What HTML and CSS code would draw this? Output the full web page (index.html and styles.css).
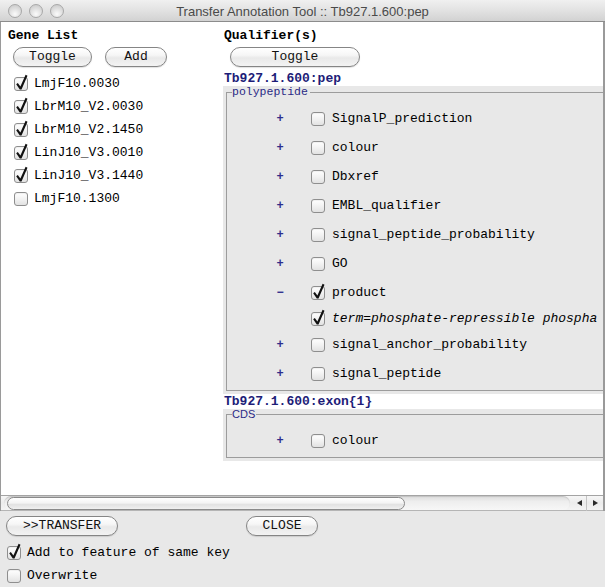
FILE: index.html
```html
<!DOCTYPE html>
<html>
<head>
<meta charset="utf-8">
<title>Transfer Annotation Tool</title>
<link rel="stylesheet" href="styles.css">
</head>
<body>
<svg class="defs" width="0" height="0" aria-hidden="true">
  <defs>
    <symbol id="tick" viewBox="0 -4 16 18">
      <path d="M2.2 7.3 L3.8 6.1 L6.4 9.5 L11.6 -2.2 L13.5 -1.3 L7.5 12.6 L5.8 12.6 Z" fill="#111"/>
    </symbol>
  </defs>
</svg>
<div class="window">
  <div class="titlebar">
    <div class="lights"><span class="light"></span><span class="light"></span><span class="light"></span></div>
    <div class="title">Transfer Annotation Tool :: Tb927.1.600:pep</div>
    <div></div>
  </div>
  <div class="pane">
    <div class="viewport">
      <div class="content">
        <div class="genes">
          <div class="head">Gene List</div>
          <div class="btnrow">
            <span class="btn w-toggle">Toggle</span>
            <span class="btn w-add">Add</span>
          </div>
          <ul class="genelist">
            <li><span class="cb"><svg class="tick"><use href="#tick"/></svg></span>LmjF10.0030</li>
            <li><span class="cb"><svg class="tick"><use href="#tick"/></svg></span>LbrM10_V2.0030</li>
            <li><span class="cb"><svg class="tick"><use href="#tick"/></svg></span>LbrM10_V2.1450</li>
            <li><span class="cb"><svg class="tick"><use href="#tick"/></svg></span>LinJ10_V3.0010</li>
            <li><span class="cb"><svg class="tick"><use href="#tick"/></svg></span>LinJ10_V3.1440</li>
            <li><span class="cb"></span>LmjF10.1300</li>
          </ul>
        </div>
        <div class="quals">
          <div class="head">Qualifier(s)</div>
          <div class="btnrow qbtn"><span class="btn w-qtoggle">Toggle</span></div>
          <div class="feat">Tb927.1.600:pep</div>
          <div class="panel">
            <fieldset class="group">
              <legend class="legend mono">polypeptide</legend>
              <div class="row first"><span class="exp">+</span><span class="cb"></span><span class="qname">SignalP_prediction</span></div>
              <div class="row"><span class="exp">+</span><span class="cb"></span><span class="qname">colour</span></div>
              <div class="row"><span class="exp">+</span><span class="cb"></span><span class="qname">Dbxref</span></div>
              <div class="row"><span class="exp">+</span><span class="cb"></span><span class="qname">EMBL_qualifier</span></div>
              <div class="row"><span class="exp">+</span><span class="cb"></span><span class="qname">signal_peptide_probability</span></div>
              <div class="row"><span class="exp">+</span><span class="cb"></span><span class="qname">GO</span></div>
              <div class="row"><span class="exp">&minus;</span><span class="cb"><svg class="tick"><use href="#tick"/></svg></span><span class="qname">product</span></div>
              <div class="row tight"><span class="exp"></span><span class="cb"><svg class="tick"><use href="#tick"/></svg></span><span class="qname term">term=phosphate-repressible phospha</span></div>
              <div class="row tight"><span class="exp">+</span><span class="cb"></span><span class="qname">signal_anchor_probability</span></div>
              <div class="row"><span class="exp">+</span><span class="cb"></span><span class="qname">signal_peptide</span></div>
            </fieldset>
          </div>
          <div class="feat">Tb927.1.600:exon{1}</div>
          <div class="panel">
            <fieldset class="group cds">
              <legend class="legend sans">CDS</legend>
              <div class="row first"><span class="exp">+</span><span class="cb"></span><span class="qname">colour</span></div>
            </fieldset>
          </div>
        </div>
      </div>
    </div>
    <div class="hbar">
      <div class="track"><div class="thumb"></div></div>
      <div class="arrows">
        <span class="arrow"><span class="tri-left"></span></span>
        <span class="arrow right"><span class="tri-right"></span></span>
      </div>
    </div>
  </div>
  <div class="bottom">
    <div class="btnrow">
      <span class="btn w-transfer">&gt;&gt;TRANSFER</span>
      <span class="btn w-close">CLOSE</span>
    </div>
    <ul class="options">
      <li><span class="cb"><svg class="tick"><use href="#tick"/></svg></span>Add to feature of same key</li>
      <li><span class="cb"></span>Overwrite</li>
    </ul>
  </div>
</div>
</body>
</html>
```

FILE: styles.css
```css
* { box-sizing: border-box; }
html, body { margin: 0; padding: 0; }
body {
  width: 605px;
  height: 587px;
  overflow: hidden;
  background: #e8e8e8;
  font-family: "Liberation Mono", "Courier New", monospace;
  font-size: 13px;
  color: #000;
}
.defs { position: absolute; width: 0; height: 0; }

.window { width: 605px; height: 587px; display: flex; flex-direction: column; }

/* title bar */
.titlebar {
  height: 22px;
  flex: 0 0 22px;
  display: grid;
  grid-template-columns: 1fr auto 1fr;
  align-items: start;
  background: linear-gradient(to bottom, #f0f0f0 0%, #e2e2e2 50%, #d2d2d2 100%);
  border-bottom: 1px solid #8c8c8c;
}
.lights { display: flex; gap: 7px; padding: 4px 0 0 8px; }
.light {
  width: 14px; height: 14px; border-radius: 50%;
  border: 1px solid #a8a8a8;
  background: radial-gradient(circle at 50% 75%, #fbfbfb 0%, #e2e2e2 45%, #c4c4c4 100%);
}
.title {
  font-family: "Liberation Sans", Arial, sans-serif;
  font-size: 13px;
  line-height: 19px;
  padding-top: 2px;
  color: #4a4a4a;
  white-space: nowrap;
}

/* scroll pane */
.pane {
  flex: 0 0 489px;
  display: flex; flex-direction: column;
  background: #fff;
  border-left: 1px solid #9a9a9a;
  border-right: 2px solid #9a9a9a;
}
.viewport { height: 473px; overflow: hidden; background: #fff; }
.content { display: flex; width: 800px; }

.head { font-weight: bold; line-height: 15px; margin-top: 6px; }
.btnrow { display: flex; }

.btn {
  display: inline-block;
  height: 20px;
  line-height: 18px;
  text-align: center;
  border: 1px solid #858585;
  border-radius: 10px;
  background: linear-gradient(to bottom, #ffffff 0%, #f6f6f6 40%, #e9e9e9 55%, #f3f3f3 100%);
  box-shadow: 0 1px 1px rgba(0,0,0,0.12);
  font-size: 13px;
  color: #111;
}

/* gene list column */
.genes { flex: 0 0 222px; padding-left: 7px; }
.genes .btnrow { margin-top: 4px; margin-left: 5px; gap: 13px; }
.w-toggle { width: 79px; }
.w-add { width: 62px; }
.genelist { list-style: none; margin: 5px 0 0 0; padding: 0 0 0 6px; }
.genelist li, .options li { height: 23px; display: flex; align-items: center; white-space: nowrap; }
.genelist .cb { margin-right: 6px; }

/* checkbox */
.cb {
  position: relative;
  flex: 0 0 14px;
  width: 14px; height: 14px;
  border: 1px solid #8e8e8e;
  border-radius: 3px;
  background: linear-gradient(to bottom, #ffffff 0%, #f2f2f2 50%, #e2e2e2 100%);
  box-shadow: inset 0 1px 1px rgba(0,0,0,0.06);
}
.tick { position: absolute; left: -1px; top: -5px; width: 16px; height: 18px; overflow: visible; }

/* qualifier column */
.quals { flex: 0 0 560px; }
.quals .head { padding-left: 1px; }
.qbtn { margin-top: 4px; padding-left: 7px; }
.w-qtoggle { width: 130px; }
.feat {
  font-weight: bold;
  color: #1d1d78;
  line-height: 15px;
  padding-left: 1px;
  margin-top: 4px;
}
.panel + .feat { margin-top: 0; }

.panel { background: #e8e8e8; padding: 0 0 3px 3px; }
.group {
  margin: 0;
  border: 1px solid #9c9c9c;
  padding: 9px 0 5px 0;
  min-width: 0;
}
.legend {
  padding: 0 2px 0 0;
  margin-left: 5px;
  color: #2a2a86;
}
.legend.mono { font-size: 11.5px; line-height: 12px; }
.legend.sans { font-family: "Liberation Sans", Arial, sans-serif; font-size: 11px; line-height: 10px; padding-right: 1px; }
.group.cds { padding-top: 10px; padding-bottom: 5px; }

.row { height: 23px; display: flex; align-items: center; margin-top: 6px; white-space: nowrap; }
.row.first { margin-top: 0; }
.row.tight { margin-top: 3px; }
.exp {
  flex: 0 0 8px;
  margin-left: 49px;
  margin-right: 27px;
  font-weight: bold;
  font-size: 12px;
  color: #2e2e8c;
  text-align: center;
}
.qname { margin-left: 7px; }
.qname.term { font-style: italic; }

/* horizontal scrollbar */
.hbar {
  height: 16px;
  border-top: 1px solid #a4a4a4;
  border-bottom: 1px solid #b5b5b5;
  background: linear-gradient(to bottom, #f6f6f6 0%, #ececec 50%, #f4f4f4 100%);
  display: flex;
  align-items: center;
}
.track {
  flex: 1;
  height: 14px;
  margin-left: 3px;
  border-radius: 7px;
  background: linear-gradient(to bottom, #dcdcdc 0%, #eeeeee 40%, #f7f7f7 100%);
  box-shadow: inset 0 1px 1px rgba(0,0,0,0.12);
  display: flex;
  align-items: center;
  padding-left: 3px;
}
.thumb {
  width: 398px;
  height: 13px;
  border: 1px solid #8a8a8a;
  border-radius: 7px;
  background: linear-gradient(to bottom, #ffffff 0%, #f4f4f4 45%, #e2e2e2 60%, #f0f0f0 100%);
}
.arrows { display: flex; height: 15px; margin-left: 3px; }
.arrow {
  width: 14px; height: 15px;
  display: flex; align-items: center; justify-content: center;
  border-right: 1px solid #c4c4c4;
}
.arrow.right { width: 16px; border-right: none; }
.tri-left { width: 0; height: 0; border-top: 3.5px solid transparent; border-bottom: 3.5px solid transparent; border-right: 5px solid #2a2a2a; }
.tri-right { width: 0; height: 0; border-top: 3.5px solid transparent; border-bottom: 3.5px solid transparent; border-left: 5px solid #2a2a2a; }

/* bottom panel */
.bottom { flex: 1; background: #e8e8e8; padding: 5px 0 0 6px; }
.w-transfer { width: 112px; }
.w-close { width: 72px; margin-left: 128px; }
.options { list-style: none; margin: 5px 0 0 1px; padding: 0; }
.options .cb { margin-right: 6px; }
```
